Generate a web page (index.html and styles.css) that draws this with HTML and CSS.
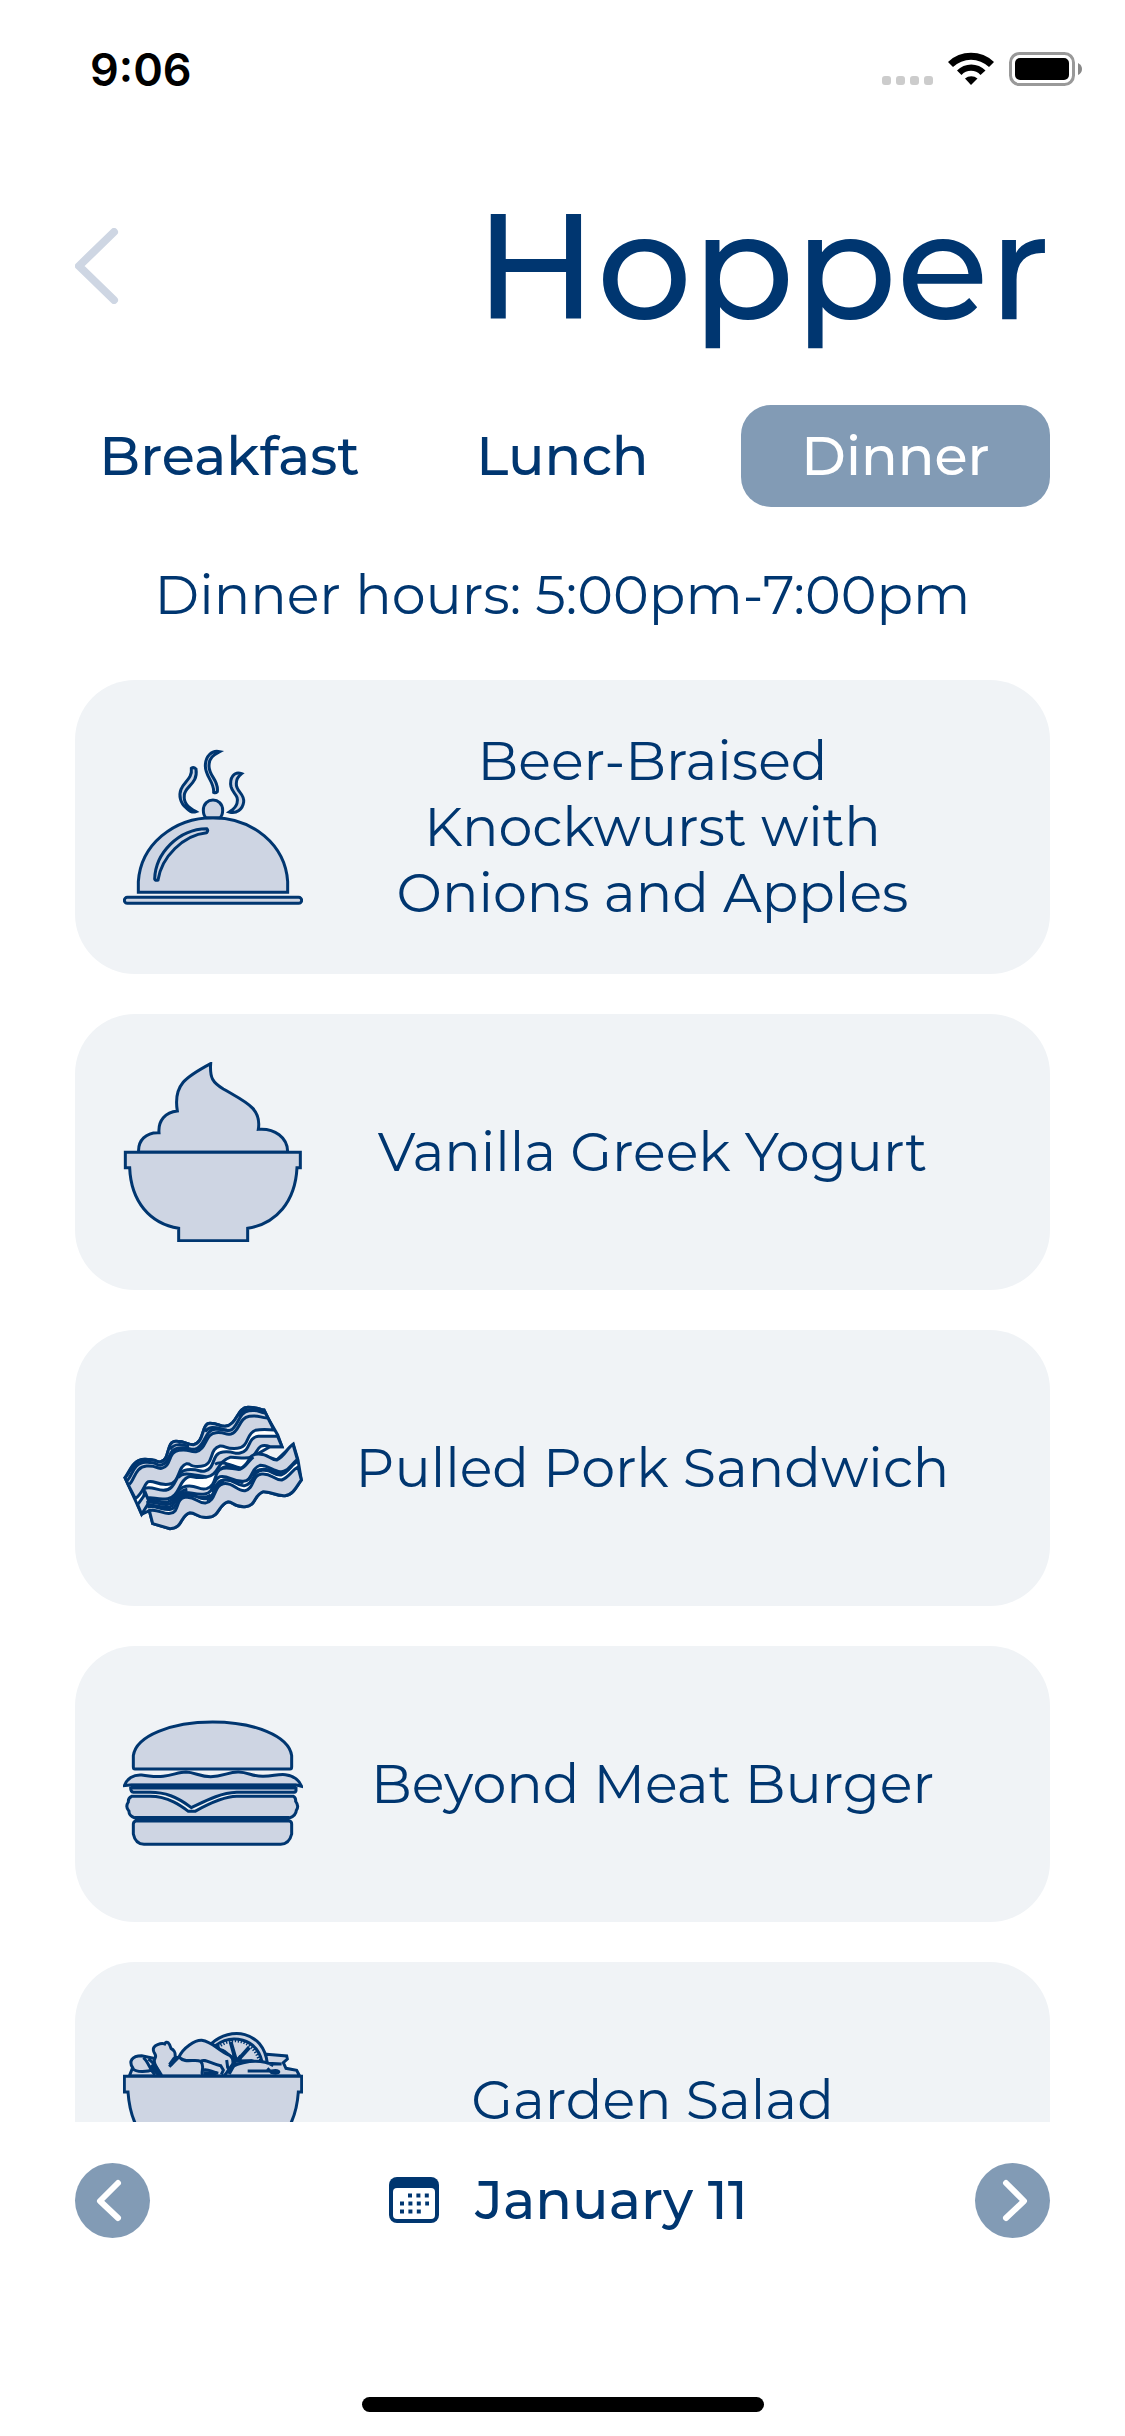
FILE: index.html
```html
<!DOCTYPE html>
<html lang="en">
<head>
<meta charset="utf-8">
<meta name="viewport" content="width=device-width, initial-scale=1">
<title>Hopper – Dinner</title>
<link rel="stylesheet" href="styles.css">
</head>
<body>
<div class="status">
  <span class="time">9:06</span>
  <svg class="status-icons" viewBox="0 0 201 36" aria-hidden="true">
    <g fill="#ccc"><rect x="0" y="24" width="9" height="9" rx="3"/><rect x="14" y="24" width="9" height="9" rx="3"/><rect x="28" y="24" width="9" height="9" rx="3"/><rect x="42" y="24" width="9" height="9" rx="3"/></g>
    <path d="M66 10A33 33 0 0 1 112 10L107 15A26 26 0 0 0 71 15Z"/>
    <path d="M75 18.500A20 20 0 0 1 103.500 18.500L98.500 23A13 13 0 0 0 79.500 23Z"/>
    <path d="M83 26.500A10 10 0 0 1 95.500 26.500L89 33Z"/>
    <rect x="128.500" y="1.500" width="63" height="31" rx="9" fill="none" stroke="#999" stroke-width="3"/>
    <rect x="133" y="6" width="54" height="22" rx="5"/>
    <path d="M196 11Q200 13 200 17Q200 21 196 23Z" fill="#888"/>
  </svg>
</div>
<header class="head">
  <button class="back" aria-label="Back"><svg viewBox="0 0 44 76"><path d="M39 4L4 38L39 72"/></svg></button>
  <h1>Hopper</h1>
</header>
<nav class="tabs" aria-label="Meals">
  <button class="tab">Breakfast</button>
  <button class="tab">Lunch</button>
  <button class="tab active" aria-current="true">Dinner</button>
</nav>
<p class="hours">Dinner hours: 5:00pm-7:00pm</p>
<main class="menu">
  <article class="card">
    <svg class="icon" viewBox="69 21 540 540" aria-hidden="true">
      <path d="M115 487V455C122 345 220 263 339 263S556 345 563 455V487Z"/>
      <path d="M318 263Q310 257 310 241C310 200 368 200 368 241Q368 257 360 263Z"/>
      <path d="M164 447C166 370 235 297 320 296Q326 302 320 308C250 315 185 380 174 450Q166 453 164 447Z"/>
      <rect x="73" y="502" width="532" height="18" rx="9"/>
      <path d="M274 115Q281 110 288 117C295 162 255 168 253 195C250 220 265 232 288 245Q275 250 260 235C240 220 236 195 243 178C252 155 278 145 274 115Z"/>
      <path d="M359 65C335 60 316 78 316 108C316 140 343 155 341 187Q347 190 352 185C357 150 327 140 327 108C327 84 340 75 359 65Z"/>
      <path d="M425 131C402 122 388 145 393 170C398 192 418 195 411 220C407 234 398 239 388 246C410 252 428 238 431 216C434 190 407 185 409 160C409 145 416 138 425 131Z"/>
    </svg>
    <h2>Beer-Braised Knockwurst with Onions and Apples</h2>
  </article>
  <article class="card">
    <svg class="icon" viewBox="69 66 540 540" aria-hidden="true">
      <path d="M116 337C113 302 138 276 177 278C174 243 196 216 232 213C219 135 257 111 332 71C329 114 338 127 370 147C440 188 485 205 475 268C523 264 564 292 563 337Z"/>
      <path d="M76 337H601V383H591C586 485 529 551 443 565V602H236V565C150 551 93 485 89 383H76Z"/>
    </svg>
    <h2>Vanilla Greek Yogurt</h2>
  </article>
  <article class="card">
    <svg class="icon" viewBox="69 -6 540 540" aria-hidden="true">
      <path class="white" d="M75 293L92 265S105 238 135 238S165 246 180 246C213 240 196 184 228 184S260 194 280 194C315 188 303 130 330 130S355 139 375 139C413 135 410 82 444 82S475 88 492 90L506 118L533 165L546 200H510L475 220L530 240L580 193L594 240L604 300C590 318 580 345 555 347S510 334 490 335C460 345 470 378 435 380S400 365 385 365C355 372 360 409 325 412S290 398 270 398C240 405 250 445 210 446L158 431L148 392L125 403Z"/>
      <path d="M75 293C92 280 95 238 135 238S165 246 180 246C213 240 196 184 228 184S260 194 280 194C315 188 303 130 330 130S355 139 375 139C413 135 410 82 444 82S475 88 492 90L504 114L522 150S485 147 466 151C437 160 449 202 412 205S380 197 360 198C325 207 344 256 303 259S278 250 260 251C230 260 242 310 205 313S165 300 145 305C133 310 132 336 106 356L84 313Z"/>
      <path d="M133 325C155 318 168 330 190 331C235 330 223 272 262 269S297 278 315 273C348 265 333 219 369 216S402 224 420 219C455 212 440 173 475 169H533L546 200H510C470 185 475 220 456 230S410 230 390 232C350 244 358 286 319 291S285 288 267 290C235 300 240 350 203 356S160 346 132 356Z"/>
      <path d="M137 340L145 360C165 357 180 370 205 365C240 352 225 325 258 319S295 333 320 326C355 315 335 277 370 262S405 271 420 266C455 250 440 223 474 222S507 240 530 240C555 230 560 205 579 193L592 238C570 258 560 278 540 275S500 255 480 256C450 265 460 302 430 304S383 284 360 290C335 299 345 338 315 342S272 335 252 338C220 350 230 386 195 382S160 375 143 374L125 403L113 374Z"/>
      <path d="M148 392C170 385 190 403 210 400C240 398 225 357 255 352S292 370 316 369C350 364 340 316 370 311S410 334 435 332C465 325 455 285 485 282S520 300 545 300C570 290 575 270 594 261L604 300C590 318 580 345 555 347S510 334 490 335C460 345 470 378 435 380S400 365 385 365C355 372 360 409 325 412S290 398 270 398C240 405 250 445 210 446L158 431Z"/>
      <g class="lines">
        <path d="M80 303C97 290 98 248 137 247S165 256 182 256C213 250 202 208 235 204S265 209 284 208C315 203 313 149 345 148S370 154 390 151C413 146 415 96 447 92S475 97 495 99"/>
        <path d="M88 313C104 300 105 260 140 258S165 267 185 265C215 260 203 215 237 211S265 216 288 215C320 209 315 160 348 158S372 166 393 162C420 155 416 113 448 109S478 113 502 114"/>
        <path d="M96 275Q110 244 142 243M210 208C225 188 245 193 267 200M315 155C330 134 350 144 380 150M415 109C430 84 455 87 488 94"/>
        <path d="M139 368C165 362 180 377 205 373C237 364 227 335 262 328M142 381C170 375 190 393 212 388C237 382 225 351 260 346S293 360 317 356C352 349 340 306 370 300S408 319 433 317C464 312 455 275 486 271S520 288 543 285C567 277 575 253 591 246M320 360C350 350 342 313 372 307M223 365C240 335 270 345 290 350S318 352 332 345"/>
        <path d="M235 293C250 273 280 285 320 291M345 253C365 240 395 258 421 264M360 268C382 257 400 270 420 268C440 260 443 244 460 231"/>
        <path d="M336 335C353 315 350 298 382 300S410 309 430 307M445 300C460 275 475 263 505 269S530 281 544 279"/>
      </g>
    </svg>
    <h2>Pulled Pork Sandwich</h2>
  </article>
  <article class="card">
    <svg class="icon" viewBox="69 -15 540 540" aria-hidden="true">
      <path d="M105 210Q100 210 100 203V170C108 110 215 69 338 69S567 110 575 170V203Q575 210 570 210Z"/>
      <path d="M108 366H568Q575 367 575 375V405Q568 435 542 436H132Q106 435 100 405V375Q101 367 108 366Z"/>
      <path d="M95 292H150C205 292 245 322 265 337H285C325 315 370 292 410 292H580Q588 297 587 307Q598 321 589 334Q588 350 568 357H105Q86 350 87 337Q75 323 85 309Q84 297 95 292Z"/>
      <path d="M92 267H588V275Q587 280 580 280H410C360 282 318 305 274 326C230 292 195 280 150 280H100Q92 279 92 267Z"/>
      <path d="M73 260C80 240 100 226 125 228C155 231 160 235 190 232C220 229 235 219 258 219C285 220 300 233 332 233C370 233 385 218 416 219C445 220 460 233 490 232C520 232 530 225 556 227C580 230 596 241 605 262L590 258H90Z"/>
      <path d="M92 260H588M105 357H568" stroke-width="12"/>
    </svg>
    <h2>Beyond Meat Burger</h2>
  </article>
  <article class="card">
    <svg class="icon" viewBox="69 0 540 540" aria-hidden="true">
      <path d="M88 198L98 173C86 155 95 137 125 137L160 145L500 133L560 138L562 147L550 158L558 175L590 181L599 198Z"/>
      <path d="M335 100C390 50 490 60 502 160L410 165Z"/>
      <path d="M346 107C395 70 470 85 486 155M404 148L394 91M412 150L446 108M404 148L352 107M412 153L487 151"/>
      <path d="M355 112C395 77 460 88 479 155" stroke-dasharray="4 5"/>
      <path d="M392 96L407 148M448 112L414 150" stroke-width="12"/>
      <path d="M180 198C177 175 155 160 165 145C172 134 161 132 160 120C158 105 185 98 194 102C201 90 208 99 213 115C230 125 224 133 226 144L208 170L237 141C250 113 285 90 305 91C340 96 350 120 390 137L404 154L380 188L372 198Z"/>
      <path d="M237 141C255 162 284 145 302 154C315 167 303 181 307 198M302 154C315 145 330 160 362 167L370 180L364 194M310 180C325 175 335 187 355 190M380 150L383 172L392 185M383 190C390 170 405 163 430 158S490 150 520 167M443 183H515C545 177 542 195 515 188L502 175M503 160L545 162M98 175C110 190 145 185 160 178M130 143C145 155 147 175 165 195M145 147C168 162 174 180 185 196"/>
      <path d="M394 153L425 150M386 191L403 160M310 190H350M153 165L178 195M210 165L225 144" stroke-width="13"/>
      <path d="M73 199H605V246H595C589 335 545 424 450 430V470H230V430C130 424 90 335 84 246H73Z"/>
    </svg>
    <h2>Garden Salad</h2>
  </article>
</main>
<footer class="foot">
  <button class="round" aria-label="Previous day"><svg viewBox="0 0 75 75"><path d="M43 20L25 38L43 55"/></svg></button>
  <button class="date">
    <svg viewBox="0 0 50 46" aria-hidden="true"><rect width="50" height="46" rx="8"/><rect class="page" x="4" y="11" width="42" height="31" rx="4"/><path d="M19 18.500h21M11 26.500h29M11 34.500h21" stroke-dasharray="4 4.400"/></svg>
    <span>January 11</span>
  </button>
  <button class="round" aria-label="Next day"><svg viewBox="0 0 75 75"><path d="M31 20L49 38L31 55"/></svg></button>
</footer>
<div class="home"></div>
</body>
</html>
```
FILE: styles.css
```css
:root {
  --navy: #003670;
  --slate: #829bb5;
  --card: #f0f3f6;
  --tint: #ced5e3;
}

* { box-sizing: border-box; }

body {
  display: flex;
  flex-direction: column;
  height: 100vh;
  margin: 0;
  background: #fff;
  color: var(--navy);
  font-family: Montserrat, Inter, sans-serif;
  font-size: 54px;
  line-height: 66px;
}

h1, h2, p { margin: 0; font-weight: 400; }

button {
  padding: 0;
  border: 0;
  background: none;
  color: inherit;
  font: inherit;
  cursor: pointer;
}

svg { display: block; }

.status {
  display: flex;
  flex: none;
  justify-content: space-between;
  align-items: center;
  height: 140px;
  padding: 0 42px 0 90px;
  color: #000;
}

.time {
  font-family: Inter, sans-serif;
  font-size: 45px;
  font-weight: 600;
}

.status-icons { width: 201px; height: 36px; }

.head {
  display: flex;
  flex: none;
  justify-content: space-between;
  align-items: center;
  height: 252px;
  padding: 0 75px;
}

.back svg {
  width: 44px;
  height: 76px;
  fill: none;
  stroke: #ced6e3;
  stroke-width: 8;
  stroke-linecap: round;
  stroke-linejoin: round;
}

h1 {
  font-size: 150px;
  font-weight: 500;
  line-height: 180px;
}

.tabs {
  display: grid;
  flex: none;
  grid-template-columns: repeat(3, 1fr);
  gap: 24px;
  margin-top: 13px;
  padding: 0 75px;
}

.tab {
  height: 102px;
  border-radius: 30px;
}

.tab.active {
  background: var(--slate);
  color: #fff;
}

.tab,
.date { font-weight: 500; }

.hours {
  flex: none;
  margin: 55px 0 52px;
  text-align: center;
}

.menu {
  display: flex;
  flex: 1;
  flex-direction: column;
  gap: 40px;
  min-height: 0;
  padding: 0 75px;
  overflow-y: auto;
  scrollbar-width: none;
}

.card {
  display: flex;
  flex: none;
  align-items: center;
  min-height: 276px;
  padding: 48px;
  border-radius: 60px;
  background: var(--card);
}

.card h2 {
  flex: 1;
  padding: 0 48px;
  font-size: 54px;
  text-align: center;
}

.icon {
  flex: none;
  width: 180px;
  height: 180px;
  fill: var(--tint);
  stroke: var(--navy);
  stroke-width: 9;
}

.icon .white { fill: #fff; }
.icon .lines { fill: none; }

.foot {
  display: flex;
  flex: none;
  justify-content: space-between;
  align-items: center;
  height: 156px;
  padding: 0 75px;
}

.round {
  width: 75px;
  height: 75px;
  border-radius: 50%;
  background: var(--slate);
}

.round svg {
  width: 75px;
  height: 75px;
  fill: none;
  stroke: #fff;
  stroke-width: 6;
  stroke-linecap: round;
  stroke-linejoin: round;
}

.date {
  display: flex;
  align-items: center;
  gap: 36px;
  padding-left: 12px;
}

.date svg {
  width: 50px;
  height: 46px;
  fill: var(--navy);
  stroke: var(--navy);
  stroke-width: 0;
}

.date .page { fill: #fff; }
.date path { stroke-width: 4; }

.home {
  flex: none;
  align-self: center;
  width: 402px;
  height: 15px;
  margin: 119px 0 24px;
  border-radius: 8px;
  background: #000;
}
```
